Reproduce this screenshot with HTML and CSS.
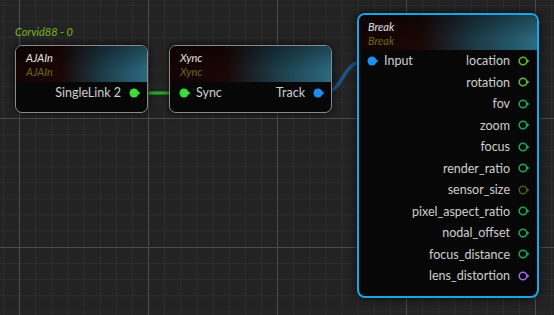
FILE: index.html
```html
<!DOCTYPE html>
<html lang="en">
<head>
  <meta charset="UTF-8">
  <title>Node Graph</title>
  <link rel="stylesheet" href="styles.css">
</head>
<body>
  <div class="canvas">
    <!-- wires -->
    <svg class="wires" width="554" height="315">
      <path d="M139 93 L178 93" stroke="#1f7a1f" stroke-width="4" fill="none"/>
      <path d="M139 93 L178 93" stroke="#36b236" stroke-width="1.5" fill="none"/>
      <path d="M321 93 C346 93 340 61 366 61" stroke="#1b5288" stroke-width="3.5" fill="none"/>
    </svg>

    <div class="group-label">Corvid88 - 0</div>

    <!-- AJAIn -->
    <div class="node node-ajain">
      <div class="node-head">
        <div class="title">AJAIn</div>
        <div class="subtitle">AJAIn</div>
      </div>
      <div class="node-body">
        <div class="row out">
          <span>SingleLink 2</span>
          <svg class="pin" width="12" height="10"><circle cx="5" cy="5" r="4.5" fill="#3bdc3b"/><path d="M9 3.2 L11.5 5 L9 6.8Z" fill="#3bdc3b"/></svg>
        </div>
      </div>
    </div>

    <!-- Xync -->
    <div class="node node-xync">
      <div class="node-head">
        <div class="title">Xync</div>
        <div class="subtitle">Xync</div>
      </div>
      <div class="node-body">
        <div class="row split">
          <div class="in">
            <svg class="pin" width="12" height="10"><circle cx="5" cy="5" r="4.5" fill="#3bdc3b"/><path d="M9 3.2 L11.5 5 L9 6.8Z" fill="#3bdc3b"/></svg>
            <span>Sync</span>
          </div>
          <div class="out">
            <span>Track</span>
            <svg class="pin" width="12" height="10"><circle cx="5" cy="5" r="4.5" fill="#1e8ff0"/><path d="M9 3.2 L11.5 5 L9 6.8Z" fill="#1e8ff0"/></svg>
          </div>
        </div>
      </div>
    </div>

    <!-- Break -->
    <div class="node node-break">
      <div class="node-head">
        <div class="title">Break</div>
        <div class="subtitle">Break</div>
      </div>
      <div class="node-body">
        <div class="row split">
          <div class="in">
            <svg class="pin" width="12" height="10"><circle cx="5" cy="5" r="4.5" fill="#1e8ff0"/><path d="M9 3.2 L11.5 5 L9 6.8Z" fill="#1e8ff0"/></svg>
            <span>Input</span>
          </div>
          <div class="out">
            <span>location</span>
            <svg class="pin" width="12" height="10" style="color:#5cb82c"><circle cx="5" cy="5" r="3.8" fill="none" stroke="currentColor" stroke-width="1.6"/><path d="M9 3.2 L11.5 5 L9 6.8Z" fill="currentColor"/></svg>
          </div>
        </div>
        <div class="row out">
          <span>rotation</span>
          <svg class="pin" width="12" height="10" style="color:#5cb82c"><circle cx="5" cy="5" r="3.8" fill="none" stroke="currentColor" stroke-width="1.6"/><path d="M9 3.2 L11.5 5 L9 6.8Z" fill="currentColor"/></svg>
        </div>
        <div class="row out">
          <span>fov</span>
          <svg class="pin" width="12" height="10" style="color:#1da55a"><circle cx="5" cy="5" r="3.8" fill="none" stroke="currentColor" stroke-width="1.6"/><path d="M9 3.2 L11.5 5 L9 6.8Z" fill="currentColor"/></svg>
        </div>
        <div class="row out">
          <span>zoom</span>
          <svg class="pin" width="12" height="10" style="color:#1da55a"><circle cx="5" cy="5" r="3.8" fill="none" stroke="currentColor" stroke-width="1.6"/><path d="M9 3.2 L11.5 5 L9 6.8Z" fill="currentColor"/></svg>
        </div>
        <div class="row out">
          <span>focus</span>
          <svg class="pin" width="12" height="10" style="color:#1da55a"><circle cx="5" cy="5" r="3.8" fill="none" stroke="currentColor" stroke-width="1.6"/><path d="M9 3.2 L11.5 5 L9 6.8Z" fill="currentColor"/></svg>
        </div>
        <div class="row out">
          <span>render_ratio</span>
          <svg class="pin" width="12" height="10" style="color:#1da55a"><circle cx="5" cy="5" r="3.8" fill="none" stroke="currentColor" stroke-width="1.6"/><path d="M9 3.2 L11.5 5 L9 6.8Z" fill="currentColor"/></svg>
        </div>
        <div class="row out">
          <span>sensor_size</span>
          <svg class="pin" width="12" height="10" style="color:#485a1e"><circle cx="5" cy="5" r="3.8" fill="none" stroke="currentColor" stroke-width="1.6"/><path d="M9 3.2 L11.5 5 L9 6.8Z" fill="currentColor"/></svg>
        </div>
        <div class="row out">
          <span>pixel_aspect_ratio</span>
          <svg class="pin" width="12" height="10" style="color:#1da55a"><circle cx="5" cy="5" r="3.8" fill="none" stroke="currentColor" stroke-width="1.6"/><path d="M9 3.2 L11.5 5 L9 6.8Z" fill="currentColor"/></svg>
        </div>
        <div class="row out">
          <span>nodal_offset</span>
          <svg class="pin" width="12" height="10" style="color:#1da55a"><circle cx="5" cy="5" r="3.8" fill="none" stroke="currentColor" stroke-width="1.6"/><path d="M9 3.2 L11.5 5 L9 6.8Z" fill="currentColor"/></svg>
        </div>
        <div class="row out">
          <span>focus_distance</span>
          <svg class="pin" width="12" height="10" style="color:#1da55a"><circle cx="5" cy="5" r="3.8" fill="none" stroke="currentColor" stroke-width="1.6"/><path d="M9 3.2 L11.5 5 L9 6.8Z" fill="currentColor"/></svg>
        </div>
        <div class="row out">
          <span>lens_distortion</span>
          <svg class="pin" width="12" height="10" style="color:#9a6ce6"><circle cx="5" cy="5" r="3.8" fill="none" stroke="currentColor" stroke-width="1.6"/><path d="M9 3.2 L11.5 5 L9 6.8Z" fill="currentColor"/></svg>
        </div>
      </div>
    </div>
  </div>
</body>
</html>
```

FILE: styles.css
```css
html, body {
  margin: 0;
  padding: 0;
  height: 100%;
  overflow: hidden;
  font-family: Lato, "Open Sans", sans-serif;
}

/* grid background */
.canvas {
  position: relative;
  width: 554px;
  height: 315px;
  background-color: #232323;
  background-image:
    linear-gradient(to right, #4a4a4a 1px, transparent 1px),
    linear-gradient(to bottom, #4a4a4a 1px, transparent 1px),
    linear-gradient(to right, #2d2d2d 1px, transparent 1px),
    linear-gradient(to bottom, #2d2d2d 1px, transparent 1px);
  background-size: 129px 129px, 129px 129px, 16.125px 16.125px, 16.125px 16.125px;
  background-position: 19px 0, 0 118px, 3px 0, 0 5px;
}

.wires {
  position: absolute;
  left: 0;
  top: 0;
  z-index: 1;
}

.group-label {
  position: absolute;
  left: 15px;
  top: 25px;
  font-size: 11px;
  font-style: italic;
  color: #78b81c;
}

/* nodes */
.node {
  position: absolute;
  display: flex;
  flex-direction: column;
  background: #070707;
  border: 1px solid #8a8a8a;
  border-radius: 7px;
  box-shadow: 0 0 8px rgba(0, 0, 0, 0.7);
  overflow: hidden;
  z-index: 2;
}

.node-ajain { left: 15px; top: 45px; width: 131px; height: 66px; }
.node-xync { left: 169px; top: 45px; width: 161px; height: 66px; }
.node-break {
  left: 357px;
  top: 13px;
  width: 178px;
  height: 281px;
  border: 2px solid #19a6e8;
  border-radius: 8px;
}

.node-head {
  height: 36px;
  padding: 5px 0 0 10px;
  box-sizing: border-box;
  background:
    linear-gradient(to bottom, rgba(0, 0, 0, 0.35), rgba(0, 0, 0, 0) 70%),
    linear-gradient(to right, #150404 0%, #1a0707 35%, #1c3a45 65%, #2b6a80 100%);
}

.node-break .node-head {
  height: 35px;
  padding-left: 9px;
}

.title, .subtitle {
  font-size: 11px;
  font-style: italic;
  line-height: 14px;
}

.title { color: #e2e2e2; }
.subtitle { color: #6c6a12; }

.node-body {
  display: flex;
  flex-direction: column;
}

.row {
  height: 21.5px;
  display: flex;
  align-items: center;
  font-size: 12.5px;
  color: #cfcfcf;
}

.row.out, .row .out {
  justify-content: flex-end;
  gap: 8px;
  display: flex;
  align-items: center;
}

.row.out { padding-right: 6px; }

.row.split {
  justify-content: space-between;
  padding: 0 6px 0 9px;
}

.row .in {
  display: flex;
  align-items: center;
  gap: 5px;
}

.node-break .row.split { padding-left: 8px; }
.node-break .row.out, .node-break .row.split { padding-right: 7px; }

.pin { display: block; }
```
